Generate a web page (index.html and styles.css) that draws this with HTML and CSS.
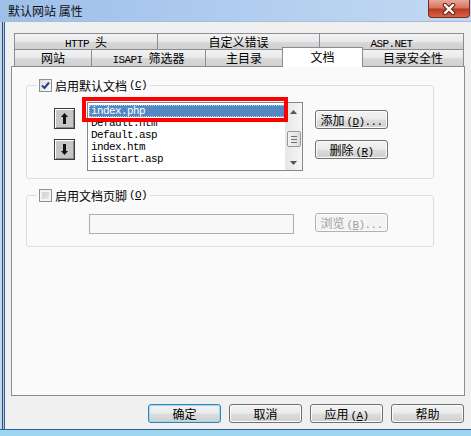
FILE: index.html
```html
<!DOCTYPE html>
<html>
<head>
<meta charset="utf-8">
<link rel="stylesheet" href="styles.css">
</head>
<body>
<div class="window">
  <div class="titlebar">
    <span class="title">默认网站 属性</span>
    <span class="close">
      <svg width="14" height="12" viewBox="0 0 14 12">
        <path d="M3 2 L11 10 M11 2 L3 10" stroke="#6b2418" stroke-width="4.5" stroke-linecap="round"/>
        <path d="M3 2 L11 10 M11 2 L3 10" stroke="#fff" stroke-width="2.4" stroke-linecap="round"/>
      </svg>
    </span>
  </div>

  <div class="client">
    <div class="tabs">
      <div class="tabrow">
        <div class="tab t-http"><span class="m">HTTP </span>头</div>
        <div class="tab t-err">自定义错误</div>
        <div class="tab t-asp"><span class="m">ASP.NET</span></div>
      </div>
      <div class="tabrow row2">
        <div class="tab t-site">网站</div>
        <div class="tab t-isapi"><span class="m">ISAPI </span>筛选器</div>
        <div class="tab t-home">主目录</div>
        <div class="tab t-doc active">文档</div>
        <div class="tab t-sec">目录安全性</div>
      </div>
    </div>

    <div class="panel">
      <fieldset class="group g1">
        <legend>
          <span class="chk">
            <svg width="11" height="11" viewBox="0 0 11 11"><path d="M2 5.5 L4.5 8 L9 2.5" fill="none" stroke="#27408b" stroke-width="2"/></svg>
          </span>启用默认文档<span class="m key">(<u>C</u>)</span>
        </legend>
        <div class="g1body">
          <div class="arrows">
            <button class="arrow">
              <svg width="9" height="11" viewBox="0 0 9 11"><path d="M4.5 0 L8 4 L6 4 L6 11 L3 11 L3 4 L1 4 Z" fill="#111"/></svg>
            </button>
            <button class="arrow">
              <svg width="9" height="11" viewBox="0 0 9 11"><path d="M4.5 11 L8 7 L6 7 L6 0 L3 0 L3 7 L1 7 Z" fill="#111"/></svg>
            </button>
          </div>
          <div class="listwrap">
            <div class="listbox">
              <ul class="items m">
                <li class="sel">index.php</li>
                <li>Default.htm</li>
                <li>Default.asp</li>
                <li>index.htm</li>
                <li>iisstart.asp</li>
              </ul>
              <div class="vscroll">
                <svg width="7" height="4" viewBox="0 0 7 4"><path d="M3.5 0 L7 4 L0 4 Z" fill="#555"/></svg>
                <span class="thumb"><i></i><i></i><i></i></span>
                <svg width="7" height="4" viewBox="0 0 7 4"><path d="M0 0 L7 0 L3.5 4 Z" fill="#555"/></svg>
              </div>
            </div>
            <div class="mark"></div>
          </div>
          <div class="side">
            <button class="btn">添加<span class="m key">(<u>D</u>)...</span></button>
            <button class="btn">删除<span class="m key">(<u>R</u>)</span></button>
          </div>
        </div>
      </fieldset>

      <fieldset class="group g2">
        <legend>
          <span class="chk off"></span>启用文档页脚<span class="m key">(<u>O</u>)</span>
        </legend>
        <div class="g2body">
          <input class="field" type="text" disabled>
          <button class="btn disabled">浏览<span class="m key">(<u>B</u>)...</span></button>
        </div>
      </fieldset>
    </div>

    <div class="actions">
      <button class="btn default">确定</button>
      <button class="btn">取消</button>
      <button class="btn">应用<span class="m key">(<u>A</u>)</span></button>
      <button class="btn">帮助</button>
    </div>
  </div>
  <div class="bottom"></div>
</div>
</body>
</html>
```

FILE: styles.css
```css
* {box-sizing: border-box;}

body {
  margin: 0;
  background: #f0f0f0;
  font-family: "Noto Sans CJK SC", sans-serif;
  font-size: 12px;
  color: #000;
}

.m {
  font-family: "Liberation Mono", monospace;
  font-size: 11px;
  letter-spacing: -0.6px;
}

.key {
  margin-left: 2px;
}

.window {
  width: 471px;
  height: 436px;
  display: flex;
  flex-direction: column;
  background: linear-gradient(90deg, #c9d7e6 0 2px, #1d5289 2px 3px, #b8cde3 3px 4px, #2e6296 4px 5px, #f0f0f0 5px);
}

/* title bar */
.titlebar {
  height: 22px;
  display: flex;
  justify-content: space-between;
  background: linear-gradient(90deg, #9dbfe8, #b4cff0 60%, #c3d9f1);
  border-bottom: 1px solid #a7bdd6;
}

.title {
  padding-left: 8px;
  line-height: 22px;
  color: #111;
}

.close {
  width: 42px;
  height: 18px;
  margin-right: 1px;
  display: flex;
  align-items: center;
  justify-content: center;
  border: 1px solid #7b2a1e;
  border-top: none;
  border-radius: 0 0 4px 4px;
  background: linear-gradient(#e7a898, #d5765f 45%, #c0391f 55%, #d2654a);
}

.client {
  flex: 1;
  padding: 11px 0 0 11px;
}

/* tabs */
.tabs {
  margin-left: 3px;
}

.tabrow {
  display: flex;
}

.tab {
  height: 17px;
  margin-left: -1px;
  border: 1px solid #898c95;
  background: linear-gradient(#f3f3f3, #e9e9e9 50%, #d9d9d9 51%, #d0d0d0);
  text-align: center;
  line-height: 15px;
  white-space: nowrap;
}

.tab:first-child {
  margin-left: 0;
}

.row2 {
  margin-top: -1px;
}

.row2 .tab {
  height: 17px;
  border-bottom: none;
  line-height: 16px;
}

.row2 .tab.active {
  height: 20px;
  margin-top: -2px;
  margin-bottom: -1px;
  background: #fff;
  position: relative;
  z-index: 2;
  line-height: 18px;
}

.t-http {width: 144px;}
.t-err {width: 163px;}
.t-asp {width: 145px;}
.t-site {width: 78px;}
.t-isapi {width: 115px;}
.t-home {width: 78px;}
.t-doc {width: 81px;}
.t-sec {width: 102px;}

.panel {
  position: relative;
  z-index: 1;
  width: 454px;
  height: 330px;
  border: 1px solid #898c95;
  background: #fafafa;
  padding-top: 1px;
}

/* group boxes */
.group {
  margin: 11px 0 0 14px;
  padding: 0;
  width: 408px;
  border: 1px solid #d5dfe5;
  border-radius: 3px;
  min-width: 0;
}

.g1 {
  height: 100px;
}

.g2 {
  margin-top: 10px;
  height: 58px;
}

.group legend {
  margin-left: 10px;
  padding: 0 3px 0 2px;
  height: 13px;
  line-height: 13px;
  display: flex;
  align-items: center;
}

.chk {
  width: 13px;
  height: 13px;
  margin-right: 3px;
  border: 1px solid #8e8f8f;
  background: linear-gradient(135deg, #dcdcdc, #fbfbfb);
  display: flex;
  align-items: center;
  justify-content: center;
}

.chk.off {
  box-shadow: inset 0 0 0 2px #f4f4f4;
  background: linear-gradient(135deg, #cbcbcb, #ececec);
}

.g1body {
  display: flex;
  align-items: flex-start;
  padding: 10px 0 0 27px;
}

.arrows {
  display: flex;
  flex-direction: column;
  gap: 10px;
  margin-top: 6px;
}

.arrow {
  width: 21px;
  height: 21px;
  padding: 0;
  border: 1px solid #3a3a3a;
  background: #c6c6c6;
  box-shadow: inset 1px 1px #fff, inset -1px -1px #8a8a8a;
  display: flex;
  align-items: center;
  justify-content: center;
}

.listwrap {
  position: relative;
  margin-left: 12px;
}

.listbox {
  width: 216px;
  height: 69px;
  border: 1px solid #828790;
  background: #fff;
  display: flex;
}

.items {
  flex: 1;
  list-style: none;
  margin: 0;
  padding: 2px 0 0 1px;
}

.items li {
  height: 12px;
  line-height: 12px;
  padding-left: 2px;
}

.items li.sel {
  background: #5389c2;
  color: #fff;
  outline: 1px dotted #b9cde4;
  outline-offset: -1px;
}

.vscroll {
  width: 17px;
  background: linear-gradient(90deg, #e6e6e6, #f5f5f5);
  display: flex;
  flex-direction: column;
  align-items: center;
  padding: 7px 0 5px;
}

.thumb {
  width: 14px;
  height: 16px;
  margin: 17px 0 auto;
  border: 1px solid #979797;
  border-radius: 2px;
  background: linear-gradient(90deg, #f2f2f2, #dedede);
  display: flex;
  flex-direction: column;
  align-items: center;
  justify-content: center;
  gap: 2px;
}

.thumb i {
  width: 6px;
  height: 1px;
  background: #707070;
}

.mark {
  position: absolute;
  left: -5px;
  top: -5px;
  width: 206px;
  height: 25px;
  border: 4px solid #f00;
}

.side {
  display: flex;
  flex-direction: column;
  gap: 11px;
  margin: 8px 0 0 12px;
}

/* buttons */
.btn {
  width: 73px;
  height: 19px;
  padding: 0;
  font: inherit;
  color: #000;
  line-height: 17px;
  border: 1px solid #707070;
  border-radius: 3px;
  background: linear-gradient(#f2f2f2, #ebebeb 48%, #dddddd 52%, #cfcfcf);
  box-shadow: inset 0 0 0 1px #fcfcfc;
  white-space: nowrap;
}

.btn.default {
  border-color: #3c7fb1;
  box-shadow: inset 0 0 0 1px #8fe0f8;
}

.btn.disabled {
  color: #a0a0a0;
  border-color: #adb2b5;
  background: #f4f4f4;
}

.g2body {
  display: flex;
  align-items: flex-start;
  padding: 12px 0 0 62px;
}

.field {
  width: 205px;
  height: 20px;
  border: 1px solid #abadb3;
  background: #f8f8f8;
  margin: 0;
}

.g2body .btn {
  margin: -1px 0 0 21px;
}

.actions {
  display: flex;
  justify-content: flex-end;
  gap: 8px;
  margin-top: 8px;
  padding-right: 7px;
}

.bottom {
  height: 7px;
  border-top: 1px solid #26609a;
  background: #9fd4ee;
}
```
